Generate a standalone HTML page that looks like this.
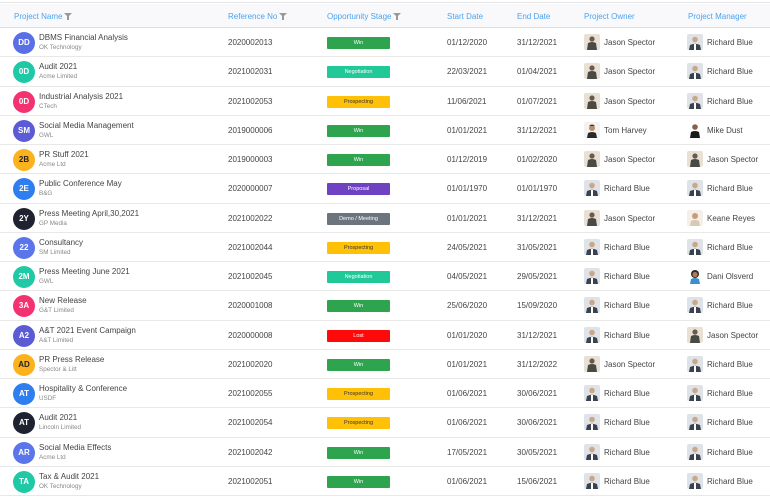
<!DOCTYPE html><html><head><style>
*{margin:0;padding:0;box-sizing:border-box}
body{width:770px;height:500px;overflow:hidden;background:#fff;font-family:"Liberation Sans",sans-serif;font-size:8px;color:#444}
.top{height:3px;border-bottom:1px solid #e6e6e6;background:#fff}
.hdr{position:absolute;top:4px;left:0;width:770px;height:24px;background:#f9f9fb;border-bottom:1px solid #ddd}
.h{position:absolute;top:8px;color:#4aa3f0;font-size:8px}
.f{display:inline-block;width:0;height:0;border-left:4px solid transparent;border-right:4px solid transparent;border-top:4px solid #999;margin-left:2px;vertical-align:2px;position:relative}
.f:after{content:"";position:absolute;left:-1px;top:-1px;width:2px;height:4px;background:#999}
.row{position:absolute;left:0;width:770px;height:29.25px;border-bottom:1px solid #e8e8e8}
.av{position:absolute;left:13px;top:4px;width:22px;height:22px;border-radius:50%;color:#fff;font-size:8px;font-weight:bold;text-align:center;line-height:22px}
.nm{position:absolute;left:39px;top:5px;font-size:8px;color:#444}
.co{position:absolute;left:39px;top:16px;font-size:6.3px;color:#888}
.c{position:absolute;top:10px;font-size:8px;color:#444}
.b{position:absolute;left:327px;top:9px;width:63px;height:12px;font-size:5.5px;line-height:12px;text-align:center;color:#fff;border-radius:1px}
.ph{position:absolute;top:6px;width:16px;height:16px;border-radius:2px;overflow:hidden}
</style></head><body>
<div class="top"></div>
<div class="hdr">
<span class="h" style="left:14px">Project Name<i class="f"></i></span>
<span class="h" style="left:228px">Reference No<i class="f"></i></span>
<span class="h" style="left:327px">Opportunity Stage<i class="f"></i></span>
<span class="h" style="left:447px">Start Date</span>
<span class="h" style="left:517px">End Date</span>
<span class="h" style="left:584px">Project Owner</span>
<span class="h" style="left:688px">Project Manager</span>
</div>
<div id="t"></div>
<script>
var J='<svg width="16" height="16"><rect width="16" height="16" fill="#e8e0d4"/><circle cx="8" cy="5" r="2.6" fill="#6b5a4a"/><path d="M3 16 L4 9 Q8 7 12 9 L13 16Z" fill="#4a4a44"/></svg>';
var R='<svg width="16" height="16"><rect width="16" height="16" fill="#dfe2e6"/><circle cx="8" cy="5.5" r="2.8" fill="#c9a88a"/><path d="M2 16 L3 11 Q8 8.5 13 11 L14 16Z" fill="#3a4250"/><path d="M7 10 h2 v6 h-2z" fill="#fff"/></svg>';
var T='<svg width="16" height="16"><rect width="16" height="16" fill="#f2f2f2"/><circle cx="8" cy="6" r="3" fill="#b98d6c"/><path d="M5 4 Q8 1 11 4Z" fill="#333"/><path d="M3 16 L4 11 Q8 9 12 11 L13 16Z" fill="#2a2a2a"/></svg>';
var M='<svg width="16" height="16"><rect width="16" height="16" fill="#fff"/><circle cx="8" cy="5" r="2.8" fill="#8a6048"/><path d="M3 16 L4 10 Q8 8 12 10 L13 16Z" fill="#1a1a1a"/></svg>';
var K='<svg width="16" height="16"><rect width="16" height="16" fill="#f4efe8"/><circle cx="8" cy="6" r="3" fill="#c79c7c"/><path d="M3 16 L4 11 Q8 9 12 11 L13 16Z" fill="#d8c8b4"/></svg>';
var D='<svg width="16" height="16"><rect width="16" height="16" fill="#fff"/><circle cx="8" cy="6" r="4" fill="#2a2a2a"/><circle cx="8" cy="6.5" r="2.6" fill="#b07a58"/><path d="M3 16 L4 11 Q8 9 12 11 L13 16Z" fill="#3a8fd0"/></svg>';
var P={J:[J,'Jason Spector'],R:[R,'Richard Blue'],T:[T,'Tom Harvey'],M:[M,'Mike Dust'],K:[K,'Keane Reyes'],D:[D,'Dani Olsverd']};
var S={W:['#2ea44f','Win','#fff'],N:['#20c997','Negotiation','#fff'],P:['#ffc107','Prospecting','#333'],O:['#6f42c1','Proposal','#fff'],D:['#6c757d','Demo / Meeting','#fff'],L:['#ff0a0a','Lost','#fff']};
var rows=[
['DD','#5a6fe6','DBMS Financial Analysis','OK Technology','2020002013','W','01/12/2020','31/12/2021','J','R'],
['0D','#20c9a6','Audit 2021','Acme Limited','2021002031','N','22/03/2021','01/04/2021','J','R'],
['0D','#f2336f','Industrial Analysis 2021','CTech','2021002053','P','11/06/2021','01/07/2021','J','R'],
['SM','#5b5bd6','Social Media Management','GWL','2019000006','W','01/01/2021','31/12/2021','T','M'],
['2B','#fbb21d','PR Stuff 2021','Acme Ltd','2019000003','W','01/12/2019','01/02/2020','J','J'],
['2E','#2f7ef0','Public Conference May','B&G','2020000007','O','01/01/1970','01/01/1970','R','R'],
['2Y','#1f2230','Press Meeting April,30,2021','GP Media','2021002022','D','01/01/2021','31/12/2021','J','K'],
['22','#5a76ea','Consultancy','SM Limited','2021002044','P','24/05/2021','31/05/2021','R','R'],
['2M','#20c9a6','Press Meeting June 2021','GWL','2021002045','N','04/05/2021','29/05/2021','R','D'],
['3A','#f2336f','New Release','G&T Limited','2020001008','W','25/06/2020','15/09/2020','R','R'],
['A2','#5b5bd6','A&T 2021 Event Campaign','A&T Limited','2020000008','L','01/01/2020','31/12/2021','R','J'],
['AD','#fbb21d','PR Press Release','Spector & Litt','2021002020','W','01/01/2021','31/12/2022','J','R'],
['AT','#2f7ef0','Hospitality & Conference','USDF','2021002055','P','01/06/2021','30/06/2021','R','R'],
['AT','#1f2230','Audit 2021','Lincoln Limited','2021002054','P','01/06/2021','30/06/2021','R','R'],
['AR','#5a76ea','Social Media Effects','Acme Ltd','2021002042','W','17/05/2021','30/05/2021','R','R'],
['TA','#20c9a6','Tax & Audit 2021','OK Technology','2021002051','W','01/06/2021','15/06/2021','R','R']];
var h='';rows.forEach(function(r,i){var s=S[r[5]],o=P[r[8]],m=P[r[9]];
h+='<div class="row" style="top:'+(28+i*29.25)+'px"><div class="av" style="background:'+r[1]+';color:'+(r[1]=='#fbb21d'?'#222':'#fff')+'">'+r[0]+'</div><div class="nm">'+r[2]+'</div><div class="co">'+r[3]+'</div><div class="c" style="left:228px">'+r[4]+'</div><div class="b" style="background:'+s[0]+';color:'+s[2]+'">'+s[1]+'</div><div class="c" style="left:447px">'+r[6]+'</div><div class="c" style="left:517px">'+r[7]+'</div><div class="ph" style="left:584px">'+o[0]+'</div><div class="c" style="left:604px">'+o[1]+'</div><div class="ph" style="left:687px">'+m[0]+'</div><div class="c" style="left:707px">'+m[1]+'</div></div>';});
document.getElementById('t').innerHTML=h;
</script>
</body></html>
